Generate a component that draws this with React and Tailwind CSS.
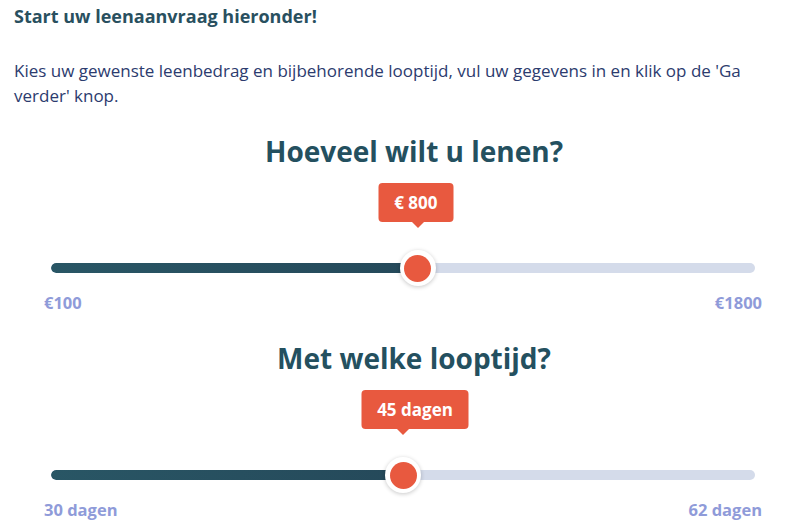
import React from "react";

const font = { fontFamily: '"Open Sans", "Liberation Sans", sans-serif' };

const Slider = ({ title, value, pct, min, max, tipWidth, tipShift }) => {
    return (
        <section className="ml-[28px] w-[772px]">
            <h2 className="text-center text-[28px] leading-[36px] font-bold text-[#24505f]">{title}</h2>

            <div className="ml-[16px] mr-[38px] mt-[81px]">
                {/* balk met bolletje */}
                <div className="relative h-[36px] mx-[7px] flex items-center">
                    <div className="w-full h-[10px] rounded-full bg-[#d4dbea] overflow-hidden">
                        <div className="h-full rounded-full bg-gradient-to-r from-[#295665] to-[#25495a]" style={{ width: `${pct}%` }} />
                    </div>
                    <div className="absolute top-0 w-[36px] h-[36px] -translate-x-1/2" style={{ left: `${pct}%` }}>
                        <div className={`absolute bottom-[64px] ${tipShift} -translate-x-1/2 ${tipWidth} h-[39px] rounded-[4px] bg-[#e8593f] flex items-center justify-center`}>
                            <span className="text-white text-[17px] font-bold whitespace-nowrap">{value}</span>
                        </div>
                        <span className="absolute bottom-[58px] left-1/2 -translate-x-1/2 w-0 h-0 border-l-[6px] border-r-[6px] border-t-[6px] border-l-transparent border-r-transparent border-t-[#e8593f]" />
                        <div className="w-[36px] h-[36px] rounded-full bg-white shadow-[0_1px_4px_rgba(0,0,0,0.22)] flex items-center justify-center">
                            <div className="w-[27px] h-[27px] rounded-full bg-[#e8593f]" />
                        </div>
                    </div>
                </div>

                <div className="mt-[7px] flex justify-between text-[16.5px] leading-[20px] font-bold text-[#8f9bd9]">
                    <span>{min}</span>
                    <span>{max}</span>
                </div>
            </div>
        </section>
    );
};

export default function App() {
    return (
        <div className="w-[800px] h-[532px] overflow-hidden bg-white" style={font}>
            <div className="px-[14px] pt-[4px]">
                <h1 className="text-[18px] leading-[24px] font-bold text-[#29505f]">Start uw leenaanvraag hieronder!</h1>
                <p className="mt-[30px] text-[17px] leading-[25px] text-[#2c3b6e]">
                    Kies uw gewenste leenbedrag en bijbehorende looptijd, vul uw gegevens in en klik op de 'Ga verder' knop.
                </p>
            </div>

            <div className="mt-[25px]">
                <Slider title="Hoeveel wilt u lenen?" value="€ 800" pct={52.1} min="€100" max="€1800" tipWidth="w-[75px]" tipShift="left-[calc(50%-2px)]" />
            </div>
            <div className="mt-[27px]">
                <Slider title="Met welke looptijd?" value="45 dagen" pct={50} min="30 dagen" max="62 dagen" tipWidth="w-[107px]" tipShift="left-[calc(50%+12px)]" />
            </div>
        </div>
    );
}
